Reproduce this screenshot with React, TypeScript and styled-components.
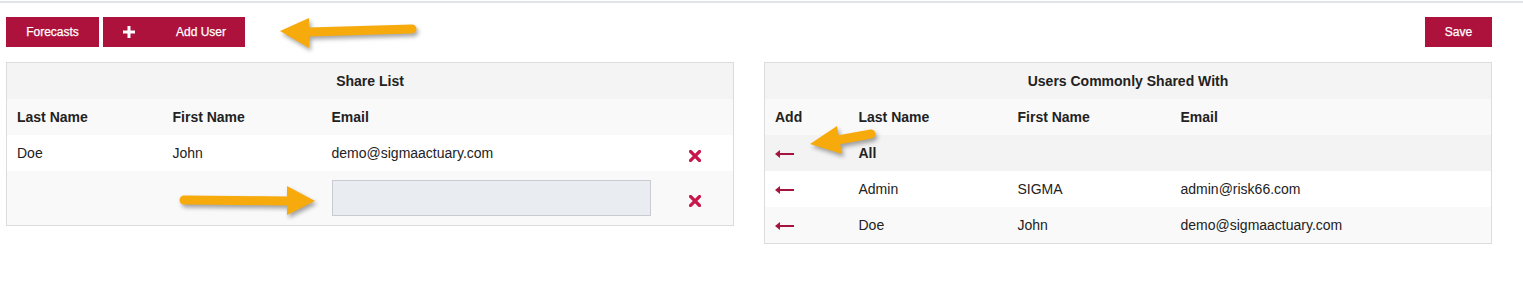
import React from 'react'
import styled, { createGlobalStyle } from 'styled-components'

const crimson = '#ad123c'

const GlobalStyle = createGlobalStyle`
  body {
    margin: 0;
    background: #fff;
    font-family: "Liberation Sans", Arial, sans-serif;
    color: #222;
  }
`

const Page = styled.div`
  position: relative;
  height: 288px;
`

const Rule = styled.div`
  margin-top: 1px;
  height: 2px;
  background: #e0e4e9;
`

const Content = styled.div`
  width: 1486px;
  margin-left: 6px;
`

const Toolbar = styled.div`
  display: flex;
  justify-content: space-between;
  align-items: center;
  margin-top: 14px;
`

const ButtonGroup = styled.div`
  display: flex;
  gap: 4px;
`

const Button = styled.button<{ $width: number }>`
  height: 30px;
  width: ${p => p.$width}px;
  border: none;
  background: ${crimson};
  color: #fff;
  font-family: "Liberation Sans", Arial, sans-serif;
  font-size: 12px;
  -webkit-text-stroke: 0.25px #fff;
  display: flex;
  align-items: center;
  justify-content: center;
  padding: 0;
  cursor: pointer;
`

const AddButton = styled(Button)`
  justify-content: flex-start;
  padding-left: 20px;
  gap: 41px;
`

const Panels = styled.div`
  display: grid;
  grid-template-columns: 728px 728px;
  gap: 30px;
  margin-top: 15px;
  align-items: start;
`

const Table = styled.table`
  width: 100%;
  border-collapse: collapse;
  border: 1px solid #dcdcdc;
  table-layout: fixed;
  font-size: 14px;
`

const Col = styled.col<{ $w?: number }>`
  ${p => (p.$w ? `width: ${p.$w}px;` : '')}
`

const TitleCell = styled.th`
  height: 36px;
  background: #f4f4f4;
  font-weight: bold;
  text-align: center;
  padding: 0;
`

const HeadCell = styled.th`
  height: 36px;
  background: #f9f9f9;
  font-weight: bold;
  text-align: left;
  padding: 0 10px;
`

const Row = styled.tr<{ $bg: string }>`
  background: ${p => p.$bg};
`

const Cell = styled.td<{ $bold?: boolean }>`
  height: 36px;
  padding: 0 10px;
  font-weight: ${p => (p.$bold ? 'bold' : 'normal')};
  color: #222;
  white-space: nowrap;
`

const InputCell = styled.td`
  padding: 9px 10px;
`

const EmailInput = styled.input`
  display: block;
  width: 319px;
  height: 36px;
  box-sizing: border-box;
  background: #e9ecf1;
  border: 1px solid #c8ccd2;
  outline: none;
`

const IconBtn = styled.span<{ $drop?: number }>`
  display: inline-flex;
  vertical-align: middle;
  cursor: pointer;
  margin-top: ${p => p.$drop ?? 0}px;
`

const Callout = styled.svg<{ $x: number; $y: number }>`
  position: absolute;
  left: ${p => p.$x}px;
  top: ${p => p.$y}px;
  overflow: visible;
  filter: drop-shadow(2px 3px 2px rgba(0, 0, 0, 0.35));
`

const Plus = () => (
  <svg width="12" height="12" viewBox="0 0 12 12">
    <path d="M6 0v12M0 6h12" stroke="#fff" strokeWidth="3" />
  </svg>
)

const Times = () => (
  <IconBtn $drop={5}>
    <svg width="12" height="12" viewBox="0 0 12 12">
      <path d="M1.5 1.5l9 9M10.5 1.5l-9 9" stroke="#c8174a" strokeWidth="3.2" strokeLinecap="square" />
    </svg>
  </IconBtn>
)

const LeftArrow = () => (
  <IconBtn>
    <svg width="19" height="8" viewBox="0 0 19 8">
      <path d="M3 4h16" stroke="#a3143e" strokeWidth="2" />
      <path d="M0 4l5-4v8z" fill="#a3143e" />
    </svg>
  </IconBtn>
)

const yellow = '#f7aa0b'

const shared = [
  { last: 'Admin', first: 'SIGMA', email: 'admin@risk66.com' },
  { last: 'Doe', first: 'John', email: 'demo@sigmaactuary.com' },
]

export default function App() {
  return (
    <Page>
      <GlobalStyle />
      <Rule />
      <Content>
        <Toolbar>
          <ButtonGroup>
            <Button $width={93}>Forecasts</Button>
            <AddButton $width={142}>
              <Plus />
              <span>Add User</span>
            </AddButton>
          </ButtonGroup>
          <Button $width={67}>Save</Button>
        </Toolbar>

        <Panels>
          <Table>
            <colgroup>
              <Col $w={156} />
              <Col $w={159} />
              <Col $w={357} />
              <Col />
            </colgroup>
            <thead>
              <tr>
                <TitleCell colSpan={4}>Share List</TitleCell>
              </tr>
              <tr>
                <HeadCell>Last Name</HeadCell>
                <HeadCell>First Name</HeadCell>
                <HeadCell>Email</HeadCell>
                <HeadCell />
              </tr>
            </thead>
            <tbody>
              <Row $bg="#fff">
                <Cell>Doe</Cell>
                <Cell>John</Cell>
                <Cell>demo@sigmaactuary.com</Cell>
                <Cell><Times /></Cell>
              </Row>
              <Row $bg="#f9f9f9">
                <Cell />
                <Cell />
                <InputCell>
                  <EmailInput />
                </InputCell>
                <Cell><Times /></Cell>
              </Row>
            </tbody>
          </Table>

          <Table>
            <colgroup>
              <Col $w={84} />
              <Col $w={159} />
              <Col $w={163} />
              <Col />
            </colgroup>
            <thead>
              <tr>
                <TitleCell colSpan={4}>Users Commonly Shared With</TitleCell>
              </tr>
              <tr>
                <HeadCell>Add</HeadCell>
                <HeadCell>Last Name</HeadCell>
                <HeadCell>First Name</HeadCell>
                <HeadCell>Email</HeadCell>
              </tr>
            </thead>
            <tbody>
              <Row $bg="#f3f3f3">
                <Cell><LeftArrow /></Cell>
                <Cell $bold>All</Cell>
                <Cell />
                <Cell />
              </Row>
              {shared.map((u, i) => (
                <Row key={i} $bg={i % 2 === 0 ? '#fff' : '#f9f9f9'}>
                  <Cell><LeftArrow /></Cell>
                  <Cell>{u.last}</Cell>
                  <Cell>{u.first}</Cell>
                  <Cell>{u.email}</Cell>
                </Row>
              ))}
            </tbody>
          </Table>
        </Panels>
      </Content>

      <Callout $x={280} $y={17} width="136" height="31" viewBox="0 0 136 31">
        <path d="M29 14L132 11" stroke={yellow} strokeWidth="9" strokeLinecap="round" />
        <path d="M0 13L29 0L29 30Z" fill={yellow} />
      </Callout>
      <Callout $x={176} $y={185} width="140" height="30" viewBox="0 0 140 30">
        <path d="M8 14L112 15" stroke={yellow} strokeWidth="9" strokeLinecap="round" />
        <path d="M139 15L111 0L111 29Z" fill={yellow} />
      </Callout>
      <Callout $x={810} $y={124} width="68" height="30" viewBox="0 0 68 30">
        <path d="M28 15L61 9" stroke={yellow} strokeWidth="9" strokeLinecap="round" />
        <path d="M0 19L27 1L32 29Z" fill={yellow} />
      </Callout>
    </Page>
  )
}
